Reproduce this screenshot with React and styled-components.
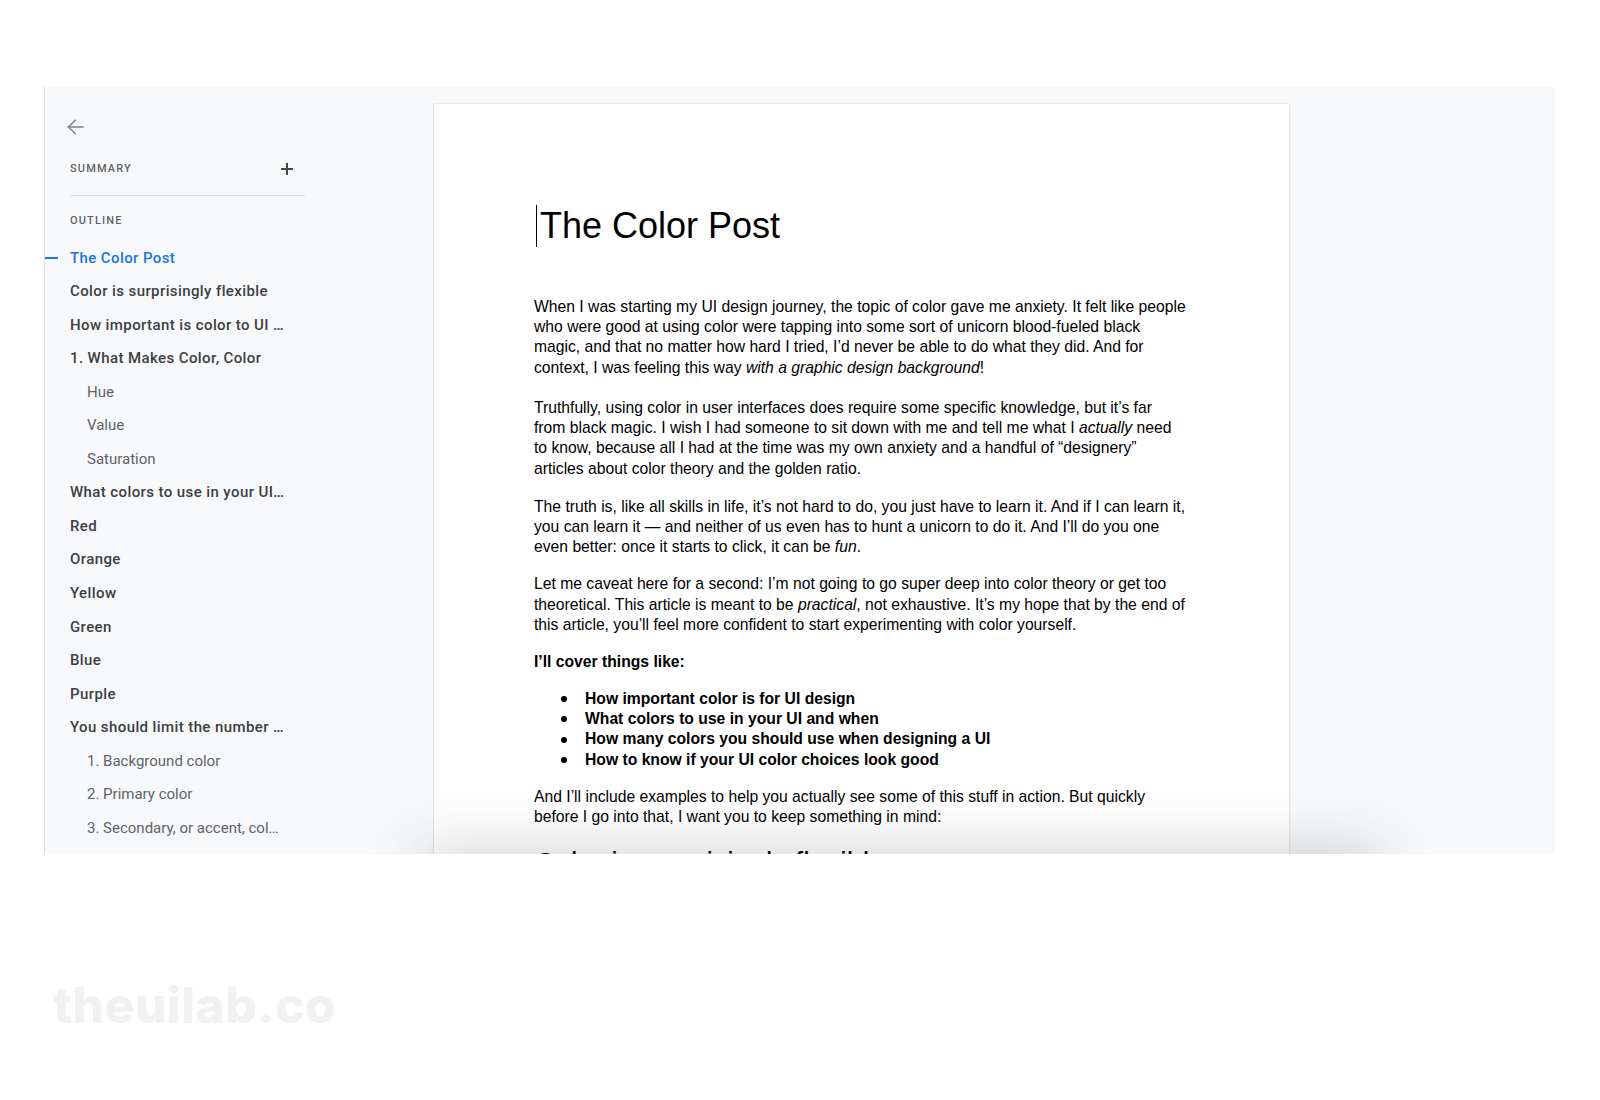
import React from 'react';
import styled, { createGlobalStyle } from 'styled-components';

const GlobalStyle = createGlobalStyle`
  html, body {
    margin: 0;
    padding: 0;
    background: #ffffff;
  }
  body {
    font-family: "Liberation Sans", Arial, sans-serif;
  }
`;

const Screen = styled.div`
  width: 1600px;
  height: 1100px;
  padding-top: 87px;
  box-sizing: border-box;
  overflow: hidden;
`;

const Frame = styled.div`
  position: relative;
  margin-left: 44px;
  width: 1511px;
  height: 767px;
  box-sizing: border-box;
  border-left: 1px solid #dadce0;
  background: #f8f9fa;
  display: flex;
  align-items: flex-start;
  overflow: hidden;
`;

const Sidebar = styled.aside`
  width: 389px;
  flex: none;
  padding-top: 25px;
  font-family: Roboto, "Noto Sans", sans-serif;
`;

const BackRow = styled.div`
  height: 30px;
  display: flex;
  align-items: center;
  padding-left: 22px;
  color: #80868b;
`;

const SummaryRow = styled.div`
  margin: 13px 0 0 25px;
  width: 235px;
  height: 28px;
  display: flex;
  align-items: center;
  justify-content: space-between;
`;

const SectionLabel = styled.div`
  font-size: 11px;
  font-weight: 500;
  letter-spacing: 1.15px;
  color: #5f6368;
  text-transform: uppercase;
  line-height: 20px;
  margin-left: ${p => (p.$inset ? '25px' : '0')};
  margin-top: ${p => p.$top || '0'};
`;

const PlusButton = styled.button`
  width: 24px;
  height: 24px;
  margin-right: 6px;
  padding: 0;
  border: 0;
  background: transparent;
  color: #444746;
  display: flex;
  align-items: center;
  justify-content: center;
`;

const Divider = styled.div`
  margin: 12px 0 0 25px;
  width: 235px;
  height: 1px;
  background: #dadce0;
`;

const OutlineList = styled.ul`
  list-style: none;
  margin: 9.75px 0 0;
  padding: 0;
`;

const OutlineItem = styled.li`
  height: 33.55px;
  display: flex;
  align-items: center;
  font-size: 15px;
  white-space: nowrap;
  font-weight: ${p => (p.$sub ? 400 : 500)};
  letter-spacing: ${p => (p.$sub ? '0' : '0.4px')};
  color: ${p => (p.$active ? '#1a73e8' : p.$sub ? '#5f6368' : '#3c4043')};
`;

const Marker = styled.span`
  flex: none;
  width: 13px;
  height: 2px;
  margin-right: 12px;
  background: ${p => (p.$on ? '#1a73e8' : 'transparent')};
`;

const ItemLabel = styled.span`
  padding-left: ${p => (p.$sub ? '17px' : '0')};
`;

const Page = styled.main`
  flex: none;
  width: 855px;
  height: 900px;
  margin-top: 17px;
  box-sizing: border-box;
  padding: 100.5px 0 0 100px;
  background: #ffffff;
  box-shadow: 0 0 1px rgba(60, 64, 67, 0.25), 0 1px 3px rgba(60, 64, 67, 0.12);
  color: #000000;
`;

const Title = styled.h1`
  margin: 0 0 50px;
  height: 42px;
  font-family: "Liberation Sans", Arial, sans-serif;
  font-weight: 400;
  font-size: 36px;
  line-height: 42px;
  white-space: nowrap;
`;

const Caret = styled.span`
  display: inline-block;
  width: 1.5px;
  height: 42px;
  margin: 0 3px 0 1.5px;
  vertical-align: top;
  background: #000;
`;

const Paragraph = styled.div`
  margin-bottom: ${p => p.$after || '16.4px'};
  font-size: 15.7px;
  line-height: 20.4px;
  font-weight: ${p => (p.$bold ? 700 : 400)};
`;

const Line = styled.span`
  display: block;
  white-space: nowrap;
`;

const BulletList = styled.ul`
  list-style: none;
  margin: 0 0 16.3px;
  padding: 0;
  font-size: 15.7px;
  line-height: 20.4px;
  font-weight: 700;
`;

const BulletItem = styled.li`
  display: flex;
  align-items: center;
  white-space: nowrap;
`;

const Dot = styled.span`
  flex: none;
  width: 6px;
  height: 6px;
  border-radius: 50%;
  background: #000;
  margin: 0 18px 0 27px;
`;

const Heading = styled.h2`
  margin: 18.5px 0 0;
  font-weight: 400;
  font-size: 29px;
  line-height: 34.8px;
  white-space: nowrap;
`;

const Shade = styled.div`
  position: absolute;
  left: 376px;
  right: 175px;
  bottom: -40px;
  height: 40px;
  box-shadow: 0 0 60px rgba(60, 64, 67, 0.3);
  pointer-events: none;
`;

const Watermark = styled.div`
  margin: 125.8px 0 0 53px;
  font-family: Inter, "Noto Sans", sans-serif;
  font-weight: 800;
  font-size: 50px;
  line-height: 1;
  letter-spacing: 0.2px;
  color: #f1f1f1;
`;

const outline = [
  { text: 'The Color Post', active: true },
  { text: 'Color is surprisingly flexible' },
  { text: 'How important is color to UI …' },
  { text: '1. What Makes Color, Color' },
  { text: 'Hue', sub: true },
  { text: 'Value', sub: true },
  { text: 'Saturation', sub: true },
  { text: 'What colors to use in your UI…' },
  { text: 'Red' },
  { text: 'Orange' },
  { text: 'Yellow' },
  { text: 'Green' },
  { text: 'Blue' },
  { text: 'Purple' },
  { text: 'You should limit the number …' },
  { text: '1. Background color', sub: true },
  { text: '2. Primary color', sub: true },
  { text: '3. Secondary, or accent, col…', sub: true },
];

const bullets = [
  'How important color is for UI design',
  'What colors to use in your UI and when',
  'How many colors you should use when designing a UI',
  'How to know if your UI color choices look good',
];

function BackArrow() {
  return (
    <svg width="17" height="16" viewBox="0 0 17 16" fill="none" stroke="currentColor" strokeWidth="1.6" strokeLinecap="square">
      <path d="M1.5 8H16" />
      <path d="M8.2 1.3L1.5 8l6.7 6.7" />
    </svg>
  );
}

function Plus() {
  return (
    <svg width="12" height="12" viewBox="0 0 12 12" stroke="currentColor" strokeWidth="2">
      <path d="M6 0v12M0 6h12" />
    </svg>
  );
}

export default function App() {
  return (
    <Screen>
      <GlobalStyle />
      <Frame>
        <Sidebar>
          <BackRow>
            <BackArrow />
          </BackRow>
          <SummaryRow>
            <SectionLabel>Summary</SectionLabel>
            <PlusButton aria-label="Add summary">
              <Plus />
            </PlusButton>
          </SummaryRow>
          <Divider />
          <SectionLabel $inset $top="15px">Outline</SectionLabel>
          <OutlineList>
            {outline.map((item, i) => (
              <OutlineItem key={i} $sub={item.sub} $active={item.active}>
                <Marker $on={item.active} />
                <ItemLabel $sub={item.sub}>{item.text}</ItemLabel>
              </OutlineItem>
            ))}
          </OutlineList>
        </Sidebar>

        <Page>
          <Title>
            <Caret />
            The Color Post
          </Title>

          <Paragraph $after="19.5px">
            <Line>When I was starting my UI design journey, the topic of color gave me anxiety. It felt like people</Line>
            <Line>who were good at using color were tapping into some sort of unicorn blood-fueled black</Line>
            <Line>magic, and that no matter how hard I tried, I’d never be able to do what they did. And for</Line>
            <Line>context, I was feeling this way <em>with a graphic design background</em>!</Line>
          </Paragraph>

          <Paragraph $after="17.4px">
            <Line>Truthfully, using color in user interfaces does require some specific knowledge, but it’s far</Line>
            <Line>from black magic. I wish I had someone to sit down with me and tell me what I <em>actually</em> need</Line>
            <Line>to know, because all I had at the time was my own anxiety and a handful of “designery”</Line>
            <Line>articles about color theory and the golden ratio.</Line>
          </Paragraph>

          <Paragraph>
            <Line>The truth is, like all skills in life, it’s not hard to do, you just have to learn it. And if I can learn it,</Line>
            <Line>you can learn it — and neither of us even has to hunt a unicorn to do it. And I’ll do you one</Line>
            <Line>even better: once it starts to click, it can be <em>fun</em>.</Line>
          </Paragraph>

          <Paragraph>
            <Line>Let me caveat here for a second: I’m not going to go super deep into color theory or get too</Line>
            <Line>theoretical. This article is meant to be <em>practical</em>, not exhaustive. It’s my hope that by the end of</Line>
            <Line>this article, you’ll feel more confident to start experimenting with color yourself.</Line>
          </Paragraph>

          <Paragraph $bold>
            <Line>I’ll cover things like:</Line>
          </Paragraph>

          <BulletList>
            {bullets.map(b => (
              <BulletItem key={b}>
                <Dot />
                {b}
              </BulletItem>
            ))}
          </BulletList>

          <Paragraph $after="0">
            <Line>And I’ll include examples to help you actually see some of this stuff in action. But quickly</Line>
            <Line>before I go into that, I want you to keep something in mind:</Line>
          </Paragraph>

          <Heading>Color is surprisingly flexible</Heading>
        </Page>

        <Shade />
      </Frame>

      <Watermark>theuilab.co</Watermark>
    </Screen>
  );
}
